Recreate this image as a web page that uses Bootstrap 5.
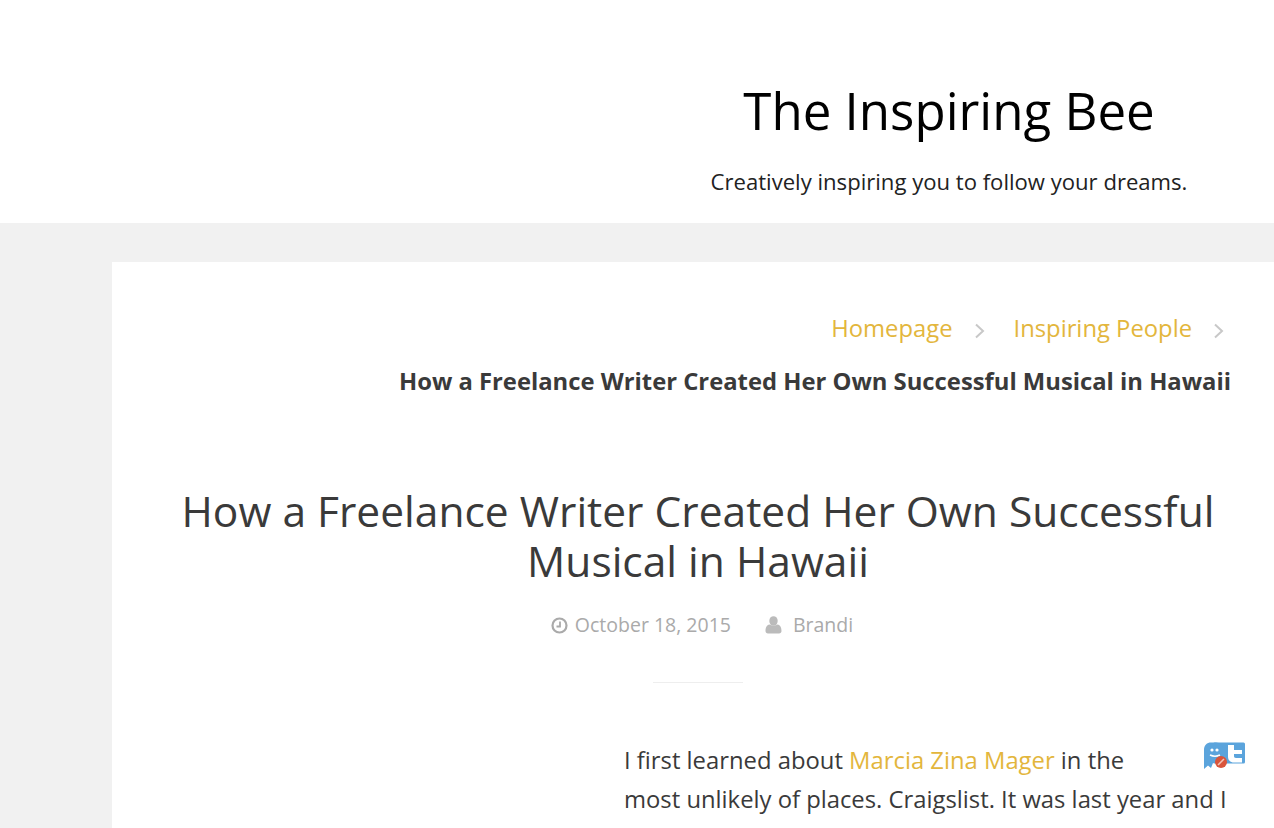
<!DOCTYPE html>
<html>
<head>
    <meta charset="UTF-8">
    <title>The Inspiring Bee</title>
    <link href="https://cdn.jsdelivr.net/npm/bootstrap@5.3.2/dist/css/bootstrap.min.css" rel="stylesheet">
    <style>
        html, body { height: 828px; overflow: hidden; }
        body { font-family: "Open Sans", sans-serif; background: #f1f1f1; color: #3a3a3a; position: relative; }
        .site-head { background: #fff; height: 223px; padding-left: 624px; padding-top: 77px; color: #000; }
        .site-title { font-size: 51px; line-height: 66px; font-weight: 400; margin: 0; }
        .site-desc { font-size: 22.1px; line-height: 30px; margin: 23px 0 0; color: #222; }
        .page-panel { background: #fff; margin: 39px -10px 0 112px; padding: 40px 53px 0 53px; height: 700px; }
        .crumbs { text-align: right; font-size: 23.8px; line-height: 53px; }
        .crumbs a { color: #e3b63c; text-decoration: none; }
        .crumbs svg { margin: 0 29px 0 22px; }
        .crumbs svg.last { margin: 0 7px 0 22px; }
        .crumbs strong { display: block; font-weight: 700; color: #3a3a3a; }
        .post-title { font-size: 42.5px; line-height: 50px; font-weight: 400; text-align: center; margin: 78px 0 0; color: #3a3a3a; }
        .post-meta { font-size: 19.5px; color: #aaa; margin-top: 25px; padding-left: 8px; line-height: 28px; }
        .meta-clock { margin-right: 7px; }
        .meta-user { margin: 0 11px 0 34px; }
        .post-rule { width: 90px; height: 1px; background: #eee; margin: 43px auto 0; }
        .post-body { margin: 58px 0 0 459px; font-size: 23.82px; line-height: 39px; color: #3a3a3a; }
        .post-body a { color: #e3b63c; text-decoration: none; }
        .tweet-badge { position: absolute; left: 1203px; top: 742px; }
    </style>
</head>
<body>
    <header class="site-head text-center">
        <h1 class="site-title">The Inspiring Bee</h1>
        <p class="site-desc">Creatively inspiring you to follow your dreams.</p>
    </header>

    <main class="page-panel">
        <nav class="crumbs">
            <a href="#">Homepage</a><svg width="10" height="16" viewBox="0 0 10 16"><path d="M1 1.500 8 8l-7 6.500" fill="none" stroke="#c8c8c8" stroke-width="2"/></svg><a href="#">Inspiring People</a><svg class="last" width="10" height="16" viewBox="0 0 10 16"><path d="M1 1.500 8 8l-7 6.500" fill="none" stroke="#c8c8c8" stroke-width="2"/></svg>
            <strong>How a Freelance Writer Created Her Own Successful Musical in Hawaii</strong>
        </nav>

        <h2 class="post-title">How a Freelance Writer Created Her Own Successful Musical in Hawaii</h2>

        <div class="post-meta d-flex justify-content-center align-items-center">
            <svg class="meta-clock" width="17" height="17" viewBox="0 0 17 17"><circle cx="8.500" cy="8.500" r="7" fill="none" stroke="#aaa" stroke-width="2.200"/><path d="M9 4.500V9.500H5.500" fill="none" stroke="#aaa" stroke-width="1.800"/></svg>
            <span>October 18, 2015</span>
            <svg class="meta-user" width="17" height="18" viewBox="0 0 17 18"><ellipse cx="8.500" cy="5" rx="4.200" ry="4.800" fill="#bbb"/><path d="M3 17.500c-1.500 0-2.500-1-2.500-2.500 0-3 1-6 4-6.500 2 1.500 6 1.500 8 0 3 .5 4 3.500 4 6.500 0 1.500-1 2.500-2.500 2.500z" fill="#bbb"/></svg>
            <span>Brandi</span>
        </div>

        <div class="post-rule"></div>

        <p class="post-body">I first learned about <a href="#">Marcia Zina Mager</a> in the<br>most unlikely of places. Craigslist. It was last year and I was selling the rights for writing tickets</p>
    </main>

    <svg class="tweet-badge" width="43" height="28" viewBox="0 0 43 28">
        <rect x="10" y="0.500" width="32" height="21" rx="1.500" fill="#5ba4dc"/>
        <path d="M1 27V8c0-5 3-7.500 7-7.500h5c4 0 7 3 7 7V21H10l-2 5-3-2.500z" fill="#5ba4dc"/>
        <circle cx="9" cy="8" r="1.600" fill="#fff"/><circle cx="14" cy="8" r="1.600" fill="#fff"/>
        <path d="M7 13c3 1.500 7 1.500 10 0" fill="none" stroke="#fff" stroke-width="1.500"/>
        <path d="M25 3h6v5h8v4h-8v2c0 1 .5 2 2 2h6v4.500h-8c-4 0-6-2.500-6-6z" fill="#fff"/>
        <circle cx="18" cy="20" r="6" fill="#d9553b"/>
        <path d="M15 23l6-6" stroke="#f3c3b5" stroke-width="1.500"/>
    </svg>

    <script src="https://cdn.jsdelivr.net/npm/bootstrap@5.3.2/dist/js/bootstrap.bundle.min.js"></script>
</body>
</html>
